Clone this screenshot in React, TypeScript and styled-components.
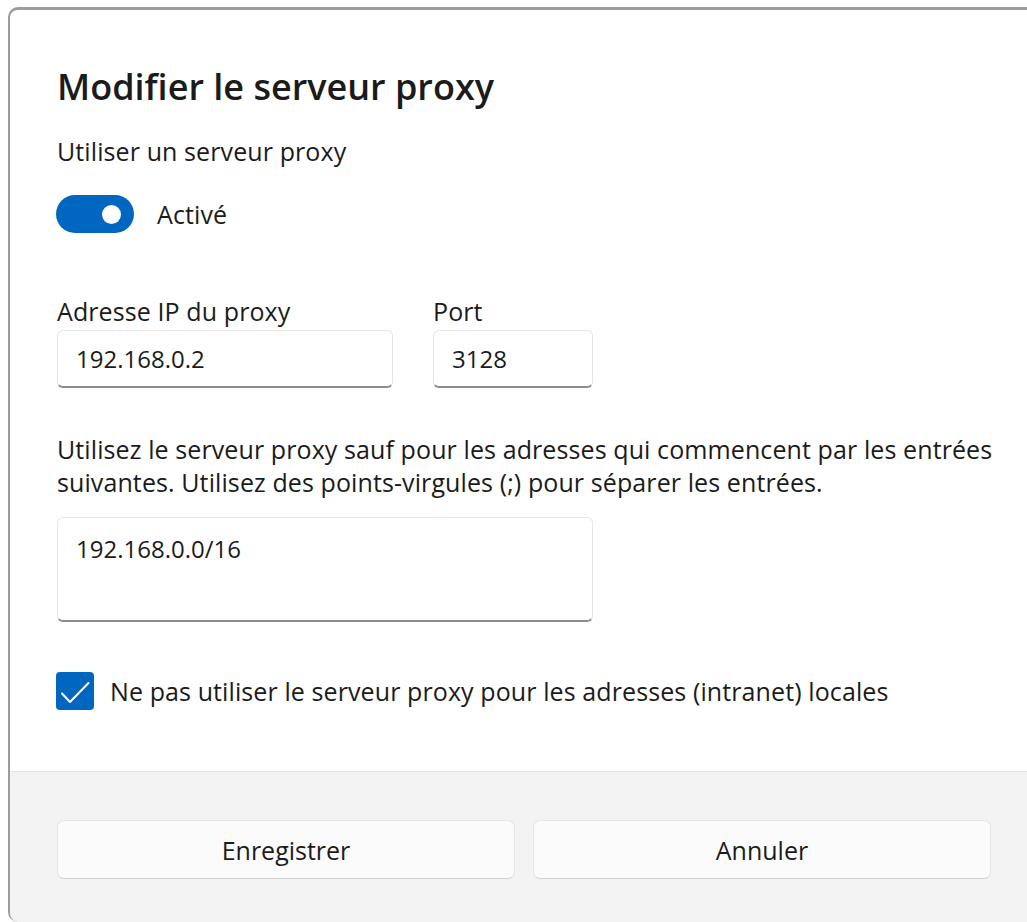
import React from 'react';
import styled, { createGlobalStyle } from 'styled-components';

const GlobalStyle = createGlobalStyle`
  html, body {
    margin: 0;
    padding: 0;
    background: #ffffff;
    overflow: hidden;
  }
  body {
    font-family: 'Open Sans', 'Noto Sans', sans-serif;
    color: #1b1b1b;
  }
`;

const Dialog = styled.div`
  margin: 7px 0 0 8px;
  width: 1032px;
  height: 915px;
  box-sizing: border-box;
  border-top: 3px solid #9c9c9c;
  border-left: 2px solid #9c9c9c;
  border-radius: 10px 0 0 10px;
  background: #ffffff;
  display: flex;
  flex-direction: column;
  overflow: hidden;
`;

const Body = styled.div`
  flex: 1;
  padding: 55px 47px 0 47px;
  display: flex;
  flex-direction: column;
  align-items: flex-start;
`;

const Title = styled.h1`
  margin: 0;
  font-size: 36px;
  line-height: 44px;
  font-weight: 600;
  color: #1b1b1b;
`;

const Text = styled.div<{ $top?: number }>`
  margin-top: ${p => p.$top ?? 0}px;
  font-size: 25px;
  line-height: 33px;
  letter-spacing: 0.1px;
  color: #1b1b1b;
`;

const ToggleRow = styled.div`
  margin-top: 27px;
  margin-left: -1px;
  display: flex;
  align-items: center;
  gap: 23px;
`;

const Toggle = styled.div<{ $on: boolean }>`
  width: 78px;
  height: 38px;
  box-sizing: border-box;
  border-radius: 19px;
  background: ${p => (p.$on ? '#0067c0' : '#ffffff')};
  display: flex;
  align-items: center;
  justify-content: ${p => (p.$on ? 'flex-end' : 'flex-start')};
  padding: 0 13px;
`;

const Knob = styled.span`
  width: 19px;
  height: 19px;
  border-radius: 50%;
  background: #ffffff;
`;

const FieldRow = styled.div`
  margin-top: 62px;
  display: flex;
  gap: 40px;
`;

const Field = styled.div`
  display: flex;
  flex-direction: column;
  gap: 2px;
`;

const Input = styled.div<{ $width: number; $height?: number; $multi?: boolean }>`
  width: ${p => p.$width}px;
  height: ${p => p.$height ?? 58}px;
  box-sizing: border-box;
  background: #ffffff;
  border: 1px solid #e6e6e6;
  border-bottom: 2px solid #8c8c8c;
  border-radius: 6px;
  padding: ${p => (p.$multi ? '14px 18px' : '0 18px')};
  display: flex;
  align-items: ${p => (p.$multi ? 'flex-start' : 'center')};
  font-size: 24px;
  line-height: 33px;
  color: #1b1b1b;
`;

const Area = styled(Input)`
  margin-top: 18px;
`;

const CheckRow = styled.div`
  margin-top: 50px;
  margin-left: -1px;
  display: flex;
  align-items: center;
  gap: 16px;
`;

const CheckBox = styled.div`
  width: 38px;
  height: 38px;
  border-radius: 4px;
  background: #0067c0;
  display: flex;
  align-items: center;
  justify-content: center;
`;

const Footer = styled.div`
  height: 151px;
  box-sizing: border-box;
  border-top: 1px solid #e5e5e5;
  background: #f3f3f3;
  padding: 48px 49px 0 47px;
  display: grid;
  grid-template-columns: 1fr 1fr;
  column-gap: 18px;
  align-items: start;
`;

const Button = styled.button`
  height: 59px;
  box-sizing: border-box;
  background: #fbfbfb;
  border: 1px solid #e5e5e5;
  border-bottom-color: #d2d2d2;
  border-radius: 7px;
  font-family: inherit;
  font-size: 25px;
  color: #1b1b1b;
`;

export default function App() {
  return (
    <>
      <GlobalStyle />
      <Dialog>
        <Body>
          <Title>Modifier le serveur proxy</Title>
          <Text $top={26}>Utiliser un serveur proxy</Text>
          <ToggleRow>
            <Toggle $on>
              <Knob />
            </Toggle>
            <Text>Activé</Text>
          </ToggleRow>
          <FieldRow>
            <Field>
              <Text>Adresse IP du proxy</Text>
              <Input $width={336}>192.168.0.2</Input>
            </Field>
            <Field>
              <Text>Port</Text>
              <Input $width={160}>3128</Input>
            </Field>
          </FieldRow>
          <Text $top={45}>
            Utilisez le serveur proxy sauf pour les adresses qui commencent par les entrées
            <br />
            suivantes. Utilisez des points-virgules (;) pour séparer les entrées.
          </Text>
          <Area $width={536} $height={105} $multi>
            192.168.0.0/16
          </Area>
          <CheckRow>
            <CheckBox>
              <svg width="38" height="38" viewBox="0 0 38 38">
                <path
                  d="M6 21.5 L14 30 L32.5 11"
                  fill="none"
                  stroke="#ffffff"
                  strokeWidth="2"
                  strokeLinecap="round"
                  strokeLinejoin="round"
                />
              </svg>
            </CheckBox>
            <Text>Ne pas utiliser le serveur proxy pour les adresses (intranet) locales</Text>
          </CheckRow>
        </Body>
        <Footer>
          <Button>Enregistrer</Button>
          <Button>Annuler</Button>
        </Footer>
      </Dialog>
    </>
  );
}
